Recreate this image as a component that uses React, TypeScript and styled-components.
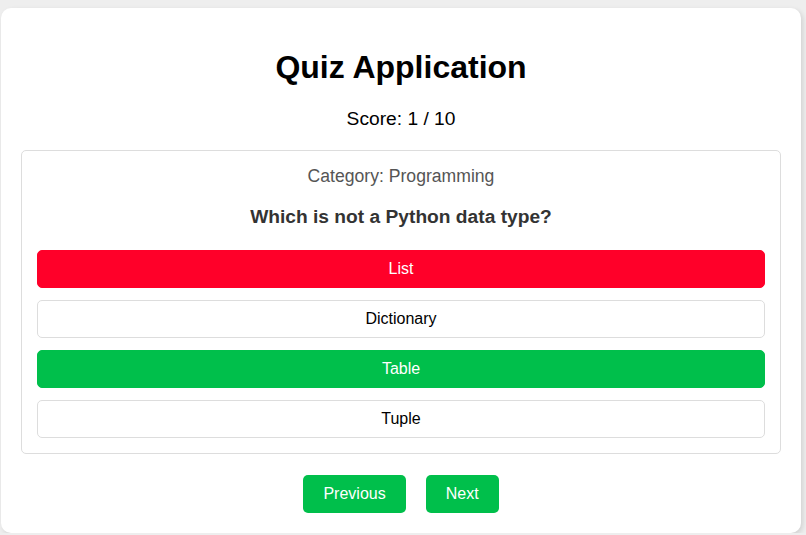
import React from "react";
import styled, { createGlobalStyle } from "styled-components";

const Global = createGlobalStyle`
  html, body {
    margin: 0;
    padding: 0;
    background: #eeeeee;
    font-family: "Liberation Sans", Arial, sans-serif;
  }
  * { box-sizing: border-box; }
`;

const Card = styled.div`
  width: 800px;
  margin: 8px 0 0 1px;
  padding: 20px;
  background: #ffffff;
  border-radius: 10px;
  box-shadow: 2px 2px 5px rgba(0, 0, 0, 0.12);
  text-align: center;
`;

const Title = styled.h1`
  margin: 21px 0 0;
  font-size: 32px;
  line-height: 37px;
  font-weight: bold;
  color: #000;
`;

const Score = styled.p`
  margin: 22px 0 0;
  font-size: 19.2px;
  line-height: 22px;
  color: #000;
`;

const Panel = styled.div`
  margin-top: 20px;
  padding: 15px;
  border: 1px solid #dddddd;
  border-radius: 5px;
`;

const Category = styled.p`
  margin: 0;
  font-size: 17.6px;
  line-height: 20px;
  color: #555555;
`;

const Question = styled.h3`
  margin: 20px 0 22px;
  font-size: 19.2px;
  line-height: 22px;
  font-weight: bold;
  color: #333333;
`;

const Options = styled.div`
  display: flex;
  flex-direction: column;
  gap: 12px;
`;

type Status = "wrong" | "right" | "plain";

const Option = styled.button<{ $status: Status }>`
  height: 38px;
  width: 100%;
  font-family: inherit;
  font-size: 16px;
  border-radius: 5px;
  cursor: pointer;
  border: 1px solid
    ${(p) => (p.$status === "wrong" ? "#ff0029" : p.$status === "right" ? "#00bf4b" : "#dddddd")};
  background: ${(p) =>
    p.$status === "wrong" ? "#ff0029" : p.$status === "right" ? "#00bf4b" : "#ffffff"};
  color: ${(p) => (p.$status === "plain" ? "#000" : "#fff")};
`;

const Nav = styled.div`
  margin-top: 21px;
  display: flex;
  justify-content: center;
  gap: 20px;
`;

const NavButton = styled.button`
  height: 38px;
  padding: 0 20px;
  font-family: inherit;
  font-size: 16px;
  color: #fff;
  background: #00bf4b;
  border: none;
  border-radius: 5px;
  cursor: pointer;
`;

const options: { label: string; status: Status }[] = [
  { label: "List", status: "wrong" },
  { label: "Dictionary", status: "plain" },
  { label: "Table", status: "right" },
  { label: "Tuple", status: "plain" },
];

export default function App() {
  return (
    <>
      <Global />
      <Card>
        <Title>Quiz Application</Title>
        <Score>Score: 1 / 10</Score>
        <Panel>
          <Category>Category: Programming</Category>
          <Question>Which is not a Python data type?</Question>
          <Options>
            {options.map((o) => (
              <Option key={o.label} $status={o.status}>
                {o.label}
              </Option>
            ))}
          </Options>
        </Panel>
        <Nav>
          <NavButton>Previous</NavButton>
          <NavButton>Next</NavButton>
        </Nav>
      </Card>
    </>
  );
}
